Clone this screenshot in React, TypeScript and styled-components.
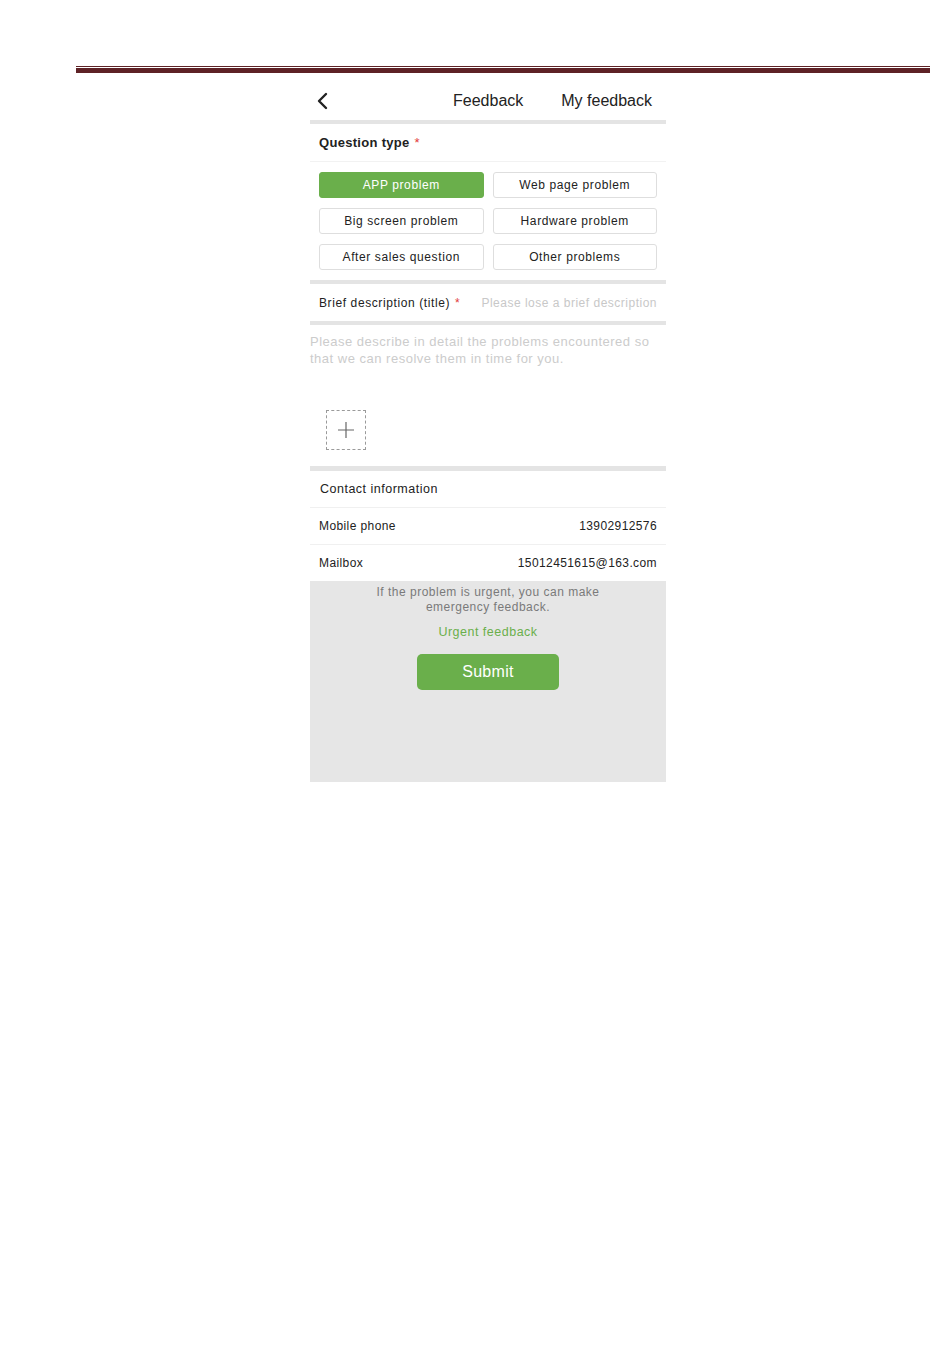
import styled, { createGlobalStyle } from "styled-components";

const GlobalStyle = createGlobalStyle`
  body {
    margin: 0;
    background: #ffffff;
    font-family: "Liberation Sans", Arial, sans-serif;
  }
`;

const Page = styled.div`
  width: 950px;
  min-height: 1369px;
  padding-top: 66px;
  box-sizing: border-box;
`;

const HeaderRule = styled.div`
  margin-left: 76px;
  width: 854px;
  height: 7px;
  border-top: 1px solid #5e2226;
  box-sizing: border-box;

  &::after {
    content: "";
    display: block;
    margin-top: 1px;
    height: 5px;
    background: #5e2226;
  }
`;

const Phone = styled.div`
  margin: 12px 0 0 310px;
  width: 356px;
  display: flex;
  flex-direction: column;
  color: #222;
  letter-spacing: 0.5px;
`;

const Nav = styled.div`
  height: 35px;
  display: flex;
  align-items: center;
  padding: 0 14px 4px 6px;
  box-sizing: border-box;
  font-size: 16px;
  letter-spacing: 0;
  color: #222;
`;

const Back = styled.svg`
  width: 14px;
  height: 18px;
`;

const NavTitle = styled.span`
  margin-left: auto;
  margin-right: 38px;
`;

const GrayBar = styled.div<{ $h?: number }>`
  height: ${(p) => p.$h ?? 4}px;
  background: #e4e4e4;
`;

const SectionTitle = styled.div`
  height: 37px;
  display: flex;
  align-items: center;
  padding-left: 9px;
  font-size: 13px;
  font-weight: 700;
  letter-spacing: 0.3px;
  border-bottom: 1px solid #f2f2f2;
`;

const Star = styled.span`
  color: #e23a3a;
  margin-left: 5px;
  font-weight: 400;
`;

const ButtonGrid = styled.div`
  display: grid;
  grid-template-columns: 1fr 1fr;
  column-gap: 9px;
  row-gap: 10px;
  padding: 10px 9px 10px 9px;
`;

const TypeButton = styled.div<{ $active?: boolean }>`
  height: 26px;
  display: flex;
  align-items: center;
  justify-content: center;
  font-size: 12px;
  letter-spacing: 0.6px;
  border-radius: 3px;
  border: 1px solid ${(p) => (p.$active ? "#6aaf4b" : "#dedede")};
  background: ${(p) => (p.$active ? "#6aaf4b" : "#fff")};
  color: ${(p) => (p.$active ? "#fff" : "#222")};
  box-sizing: border-box;
`;

const BriefRow = styled.div`
  height: 37px;
  display: flex;
  align-items: center;
  padding: 0 9px;
  font-size: 12px;
  letter-spacing: 0.6px;
`;

const Placeholder = styled.span`
  margin-left: auto;
  color: #c8c8c8;
  letter-spacing: 0.5px;
`;

const DetailText = styled.div`
  padding-top: 8px;
  font-size: 13px;
  line-height: 17px;
  color: #cccccc;
  height: 77px;
`;

const UploadArea = styled.div`
  padding: 0 0 16px 16px;
`;

const AddBox = styled.div`
  width: 40px;
  height: 40px;
  border: 1px dashed #9a9a9a;
  box-sizing: border-box;
  display: flex;
  align-items: center;
  justify-content: center;
`;

const ContactTitle = styled.div`
  height: 36px;
  display: flex;
  align-items: center;
  padding-left: 10px;
  font-size: 12.5px;
  border-bottom: 1px solid #f0f0f0;
`;

const InfoRow = styled.div<{ $last?: boolean }>`
  height: 36px;
  display: flex;
  align-items: center;
  justify-content: space-between;
  padding: 0 9px;
  font-size: 12px;
  letter-spacing: 0.4px;
  border-bottom: ${(p) => (p.$last ? "none" : "1px solid #f0f0f0")};
`;

const Footer = styled.div`
  height: 201px;
  background: #e6e6e6;
  display: flex;
  flex-direction: column;
  align-items: center;
  padding-top: 4px;
  box-sizing: border-box;
`;

const Notice = styled.div`
  font-size: 12px;
  line-height: 15px;
  color: #7a7a7a;
  text-align: center;
  width: 240px;
`;

const UrgentLink = styled.div`
  margin-top: 10px;
  font-size: 12.5px;
  color: #6aaf4b;
`;

const SubmitButton = styled.div`
  margin-top: 15px;
  width: 142px;
  height: 36px;
  border-radius: 5px;
  background: #6aaf4b;
  color: #fff;
  font-size: 16px;
  letter-spacing: 0.3px;
  display: flex;
  align-items: center;
  justify-content: center;
`;

const types = [
  "APP problem",
  "Web page problem",
  "Big screen problem",
  "Hardware problem",
  "After sales question",
  "Other problems",
];

export default function App() {
  return (
    <Page>
      <GlobalStyle />
      <HeaderRule />
      <Phone>
        <Nav>
          <Back viewBox="0 0 14 18">
            <path d="M10 2 L3 9 L10 16" fill="none" stroke="#222" strokeWidth="2.4" strokeLinecap="round" strokeLinejoin="round" />
          </Back>
          <NavTitle>Feedback</NavTitle>
          <span>My feedback</span>
        </Nav>
        <GrayBar />
        <SectionTitle>
          Question type<Star>*</Star>
        </SectionTitle>
        <ButtonGrid>
          {types.map((t, i) => (
            <TypeButton key={t} $active={i === 0}>
              {t}
            </TypeButton>
          ))}
        </ButtonGrid>
        <GrayBar />
        <BriefRow>
          Brief description (title)<Star>*</Star>
          <Placeholder>Please lose a brief description</Placeholder>
        </BriefRow>
        <GrayBar />
        <DetailText>
          Please describe in detail the problems encountered so
          <br />
          that we can resolve them in time for you.
        </DetailText>
        <UploadArea>
          <AddBox>
            <svg width="18" height="18" viewBox="0 0 18 18">
              <path d="M9 1 V17 M1 9 H17" stroke="#666" strokeWidth="1.2" />
            </svg>
          </AddBox>
        </UploadArea>
        <GrayBar $h={5} />
        <ContactTitle>Contact information</ContactTitle>
        <InfoRow>
          <span>Mobile phone</span>
          <span>13902912576</span>
        </InfoRow>
        <InfoRow $last>
          <span>Mailbox</span>
          <span>15012451615@163.com</span>
        </InfoRow>
        <Footer>
          <Notice>If the problem is urgent, you can make emergency feedback.</Notice>
          <UrgentLink>Urgent feedback</UrgentLink>
          <SubmitButton>Submit</SubmitButton>
        </Footer>
      </Phone>
    </Page>
  );
}
